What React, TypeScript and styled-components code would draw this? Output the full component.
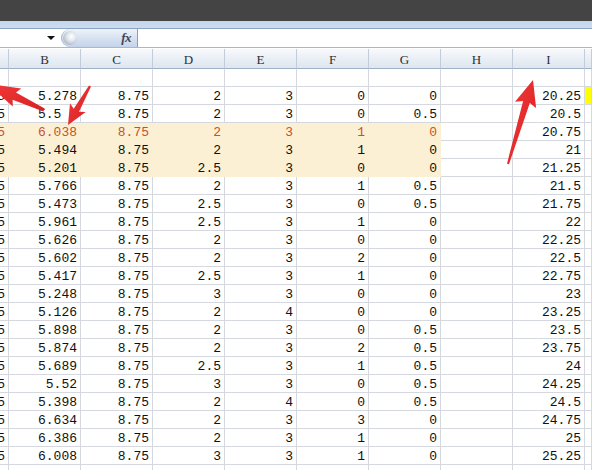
import React from "react";
import styled, { createGlobalStyle, css } from "styled-components";

const GlobalStyle = createGlobalStyle`
  html, body { margin: 0; padding: 0; background: #ffffff; overflow: hidden; }
  * { box-sizing: border-box; }
`;

const Page = styled.div`
  position: relative;
  width: 592px;
  height: 470px;
  overflow: hidden;
  display: flex;
  flex-direction: column;
  background: #ffffff;
`;

const TitleBar = styled.div`
  height: 21px;
  flex: none;
  background: #444444;
`;

const RibbonEdge = styled.div`
  height: 8px;
  flex: none;
  background: linear-gradient(#c3d6ee, #cddcf0);
  border-bottom: 1px solid #8ea5c2;
`;

const FormulaBar = styled.div`
  height: 19px;
  flex: none;
  display: flex;
  align-items: stretch;
  background: #ffffff;
  border-bottom: 1px solid #a9b7c8;
`;

const NameBox = styled.div`
  width: 61px;
  display: flex;
  align-items: center;
  justify-content: flex-end;
  padding-right: 6px;
`;

const DropArrow = styled.span`
  width: 0;
  height: 0;
  border-left: 4px solid transparent;
  border-right: 4px solid transparent;
  border-top: 4px solid #111111;
`;

const FxButton = styled.div`
  width: 77px;
  display: flex;
  align-items: center;
  justify-content: space-between;
  padding: 0 6px 0 1px;
  border-radius: 10px 0 0 10px;
  border-left: 1px solid #a7b9d0;
  border-right: 1px solid #8a9fba;
  background: linear-gradient(#eef3fa 0%, #d9e4f2 45%, #c4d4ea 100%);
`;

const Grip = styled.span`
  width: 14px;
  height: 14px;
  border-radius: 50%;
  background: radial-gradient(circle at 60% 40%, #ffffff 0%, #e3e8ef 35%, #a9b3c0 80%, #8e99a8 100%);
`;

const FxLabel = styled.span`
  font-family: "Liberation Serif", "DejaVu Serif", serif;
  font-style: italic;
  font-weight: bold;
  font-size: 13px;
  color: #3e4754;
  letter-spacing: -0.5px;
`;

const FormulaInput = styled.div`
  flex: 1;
  background: #ffffff;
`;

const Spacer = styled.div`
  height: 1px;
  flex: none;
  background: #ffffff;
`;

const Sheet = styled.div`
  display: grid;
  grid-template-columns: 9px repeat(8, 72px) 7px;
  grid-auto-rows: 18px;
  grid-template-rows: 20px;
`;

const HeaderCell = styled.div`
  height: 20px;
  display: flex;
  align-items: center;
  justify-content: center;
  padding-top: 3px;
  background: linear-gradient(#f7f9fc 0%, #eaeff6 50%, #dfe6ef 100%);
  border-right: 1px solid #c3cdda;
  border-bottom: 1px solid #9eb1c7;
  font-family: "Liberation Serif", "DejaVu Serif", serif;
  font-size: 13px;
  color: #2b2f36;
`;

const Cell = styled.div<{ $fill?: boolean; $red?: boolean; $yellow?: boolean }>`
  height: 18px;
  display: flex;
  align-items: center;
  justify-content: flex-end;
  padding: 2px 3px 0 0;
  white-space: pre;
  overflow: hidden;
  border-right: 1px solid #d5d9df;
  border-bottom: 1px solid #d5d9df;
  font-family: "Liberation Mono", "DejaVu Sans Mono", monospace;
  font-size: 13px;
  color: #111111;
  background: #ffffff;
  ${(p) =>
    p.$fill &&
    css`
      background: #fcf0d4;
      border-right-color: #fcf0d4;
      border-bottom-color: #fcf0d4;
    `}
  ${(p) =>
    p.$red &&
    css`
      color: #c8502e;
    `}
  ${(p) =>
    p.$yellow &&
    css`
      background: #ffff00;
    `}
`;

const Overlay = styled.svg`
  position: absolute;
  left: 0;
  top: 0;
  width: 592px;
  height: 470px;
  pointer-events: none;
`;

const headers = ["", "B", "C", "D", "E", "F", "G", "H", "I", ""];

const rows: string[][] = [
  ["", "", "", "", "", "", "", "", "", ""],
  ["5", "5.278", "8.75", "2", "3", "0", "0", "", "20.25", ""],
  ["5", "5.5  ", "8.75", "2", "3", "0", "0.5", "", "20.5", ""],
  ["5", "6.038", "8.75", "2", "3", "1", "0", "", "20.75", ""],
  ["5", "5.494", "8.75", "2", "3", "1", "0", "", "21", ""],
  ["5", "5.201", "8.75", "2.5", "3", "0", "0", "", "21.25", ""],
  ["5", "5.766", "8.75", "2", "3", "1", "0.5", "", "21.5", ""],
  ["5", "5.473", "8.75", "2.5", "3", "0", "0.5", "", "21.75", ""],
  ["5", "5.961", "8.75", "2.5", "3", "1", "0", "", "22", ""],
  ["5", "5.626", "8.75", "2", "3", "0", "0", "", "22.25", ""],
  ["5", "5.602", "8.75", "2", "3", "2", "0", "", "22.5", ""],
  ["5", "5.417", "8.75", "2.5", "3", "1", "0", "", "22.75", ""],
  ["5", "5.248", "8.75", "3", "3", "0", "0", "", "23", ""],
  ["5", "5.126", "8.75", "2", "4", "0", "0", "", "23.25", ""],
  ["5", "5.898", "8.75", "2", "3", "0", "0.5", "", "23.5", ""],
  ["5", "5.874", "8.75", "2", "3", "2", "0.5", "", "23.75", ""],
  ["5", "5.689", "8.75", "2.5", "3", "1", "0.5", "", "24", ""],
  ["5", "5.52", "8.75", "3", "3", "0", "0.5", "", "24.25", ""],
  ["5", "5.398", "8.75", "2", "4", "0", "0.5", "", "24.5", ""],
  ["5", "6.634", "8.75", "2", "3", "3", "0", "", "24.75", ""],
  ["5", "6.386", "8.75", "2", "3", "1", "0", "", "25", ""],
  ["5", "6.008", "8.75", "3", "3", "1", "0", "", "25.25", ""],
  ["", "", "", "", "", "", "", "", "", ""],
];

function arrowPoints(
  tx: number,
  ty: number,
  px: number,
  py: number,
  headLen: number,
  headHalf: number,
  neckHalf: number,
  tailHalf: number
): string {
  const dx = px - tx;
  const dy = py - ty;
  const len = Math.hypot(dx, dy);
  const ux = dx / len;
  const uy = dy / len;
  const nx = -uy;
  const ny = ux;
  const bx = px - ux * headLen;
  const by = py - uy * headLen;
  const nbx = bx + ux * 3;
  const nby = by + uy * 3;
  const pts: [number, number][] = [
    [tx + nx * tailHalf, ty + ny * tailHalf],
    [nbx + nx * neckHalf, nby + ny * neckHalf],
    [bx + nx * headHalf, by + ny * headHalf],
    [px, py],
    [bx - nx * headHalf, by - ny * headHalf],
    [nbx - nx * neckHalf, nby - ny * neckHalf],
    [tx - nx * tailHalf, ty - ny * tailHalf],
  ];
  return pts.map(([x, y]) => `${x.toFixed(1)},${y.toFixed(1)}`).join(" ");
}

export default function App() {
  return (
    <>
      <GlobalStyle />
      <Page>
        <TitleBar />
        <RibbonEdge />
        <FormulaBar>
          <NameBox>
            <DropArrow />
          </NameBox>
          <FxButton>
            <Grip />
            <FxLabel>fx</FxLabel>
          </FxButton>
          <FormulaInput />
        </FormulaBar>
        <Spacer />
        <Sheet>
          {headers.map((h, i) => (
            <HeaderCell key={`h${i}`}>{h}</HeaderCell>
          ))}
          {rows.map((r, ri) =>
            r.map((v, ci) => {
              const fill = ri >= 3 && ri <= 5 && ci <= 6;
              const red = ri === 3 && ci <= 6;
              const yellow = ri === 1 && ci === 9;
              return (
                <Cell key={`${ri}-${ci}`} $fill={fill} $red={red} $yellow={yellow}>
                  {v}
                </Cell>
              );
            })
          )}
        </Sheet>
        <Overlay viewBox="0 0 592 470">
          <defs>
            <linearGradient id="redg" x1="0" y1="0" x2="1" y2="1">
              <stop offset="0" stopColor="#f23a3a" />
              <stop offset="1" stopColor="#d81f22" />
            </linearGradient>
          </defs>
          <polygon points={arrowPoints(44, 110, -12, 84, 32, 10, 4, 1.5)} fill="url(#redg)" />
          <polygon points={arrowPoints(90, 86, 68, 125, 20, 9, 3, 1.2)} fill="url(#redg)" />
          <polygon points={arrowPoints(508, 164, 533, 80, 26, 11, 3.5, 1)} fill="url(#redg)" />
        </Overlay>
      </Page>
    </>
  );
}
